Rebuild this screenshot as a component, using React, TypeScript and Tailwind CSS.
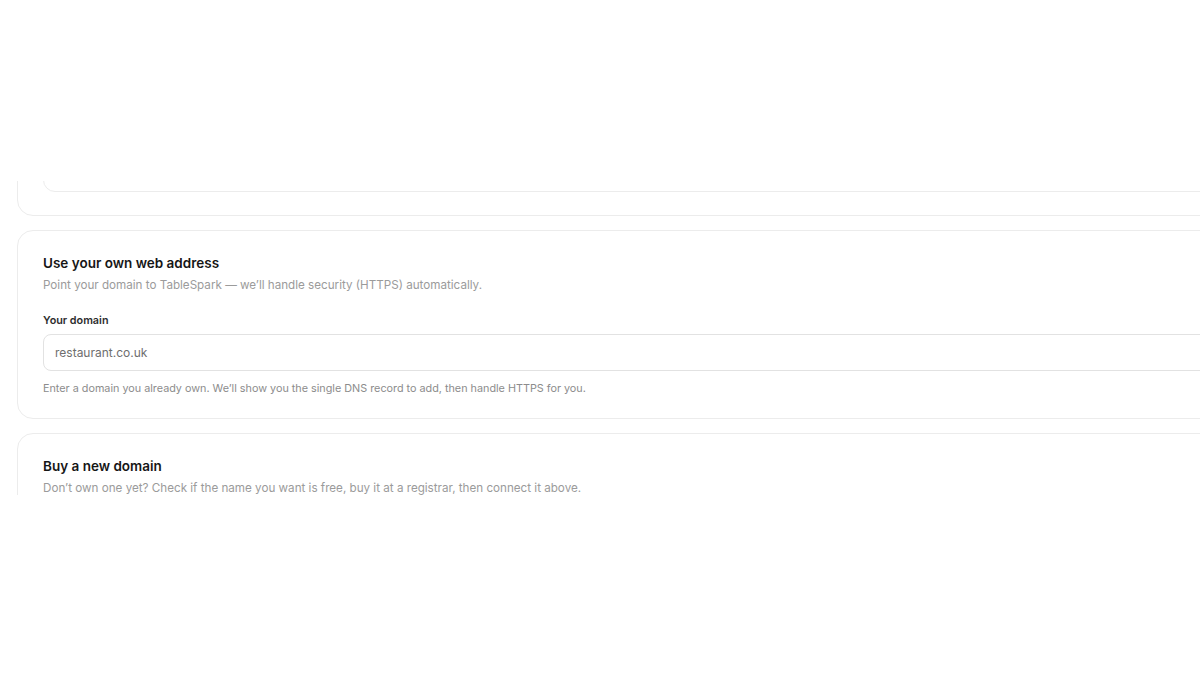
import React from 'react';

const font = { fontFamily: 'Inter, "Noto Sans", sans-serif' };

const Card: React.FC<{ children: React.ReactNode; className?: string }> = ({ children, className = '' }) => (
  <section className={`rounded-2xl border border-[#ececec] bg-white px-[25px] ${className}`}>{children}</section>
);

export default function App() {
  return (
    <div className="min-h-screen w-full bg-white" style={font}>
      <div className="h-[181px]" />
      {/* scrolled settings panel */}
      <div className="h-[314px] overflow-hidden pl-[17px]">
        <div className="-mt-[60px] flex w-[1300px] flex-col gap-[14px]">
          {/* previous card, mostly scrolled out */}
          <Card className="pt-[22px] pb-[23px]">
            <div className="h-[48px] rounded-xl border border-[#ececec]" />
          </Card>

          <Card className="pt-[22px] pb-[21px]">
            <h2 className="text-[13.5px] font-semibold leading-5 text-[#161616]">Use your own web address</h2>
            <p className="mt-1 text-[11.65px] leading-4 text-[#9b9b9b]">
              Point your domain to TableSpark — we’ll handle security (HTTPS) automatically.
            </p>
            <label className="mt-5 block text-[10.8px] font-semibold leading-4 text-[#2e2e2e]">Your domain</label>
            <div className="mt-[5px] flex h-[37px] items-center rounded-lg border border-[#e2e2e2] px-[11px]">
              <span className="text-[12px] text-[#6e6e6e]">restaurant.co.uk</span>
            </div>
            <p className="mt-[10px] text-[10.8px] leading-4 text-[#8c8c8c]">
              Enter a domain you already own. We’ll show you the single DNS record to add, then handle HTTPS for you.
            </p>
          </Card>

          <Card className="pt-[22px] pb-[22px]">
            <h2 className="text-[13.5px] font-semibold leading-5 text-[#161616]">Buy a new domain</h2>
            <p className="mt-1 text-[11.65px] leading-4 text-[#9b9b9b]">
              Don’t own one yet? Check if the name you want is free, buy it at a registrar, then connect it above.
            </p>
            <div className="mt-5 h-[120px]" />
          </Card>
        </div>
      </div>
    </div>
  );
}
